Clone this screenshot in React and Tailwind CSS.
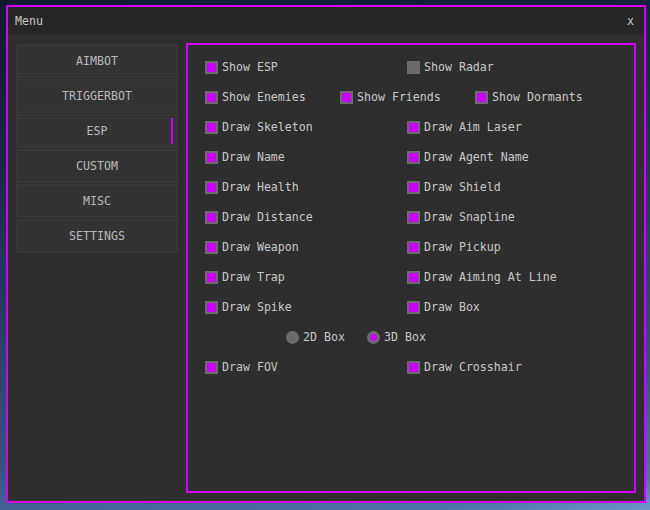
import { useState } from "react";

const font = { fontFamily: '"DejaVu Sans Mono", "Liberation Mono", monospace' };

const tabs = ["AIMBOT", "TRIGGERBOT", "ESP", "CUSTOM", "MISC", "SETTINGS"];

function Checkbox({ label, checked = true }) {
  return (
    <div className="flex items-center">
      <span
        className={`w-[13px] h-[13px] border-2 border-[#6b6b6b] ${
          checked ? "bg-[#cc00ff]" : "bg-[#6b6b6b]"
        }`}
      ></span>
      <span className="ml-[4px] pt-[1px] text-[#c8c8c8] text-[11.6px] leading-[13px] whitespace-pre">
        {label}
      </span>
    </div>
  );
}

function Radio({ label, checked }) {
  return (
    <div className="flex items-center">
      <span className="w-[13px] h-[13px] rounded-full bg-[#6b6b6b] flex items-center justify-center">
        {checked && <span className="w-[7px] h-[7px] rounded-full bg-[#cc00ff]"></span>}
      </span>
      <span className="ml-[4px] pt-[1px] text-[#c8c8c8] text-[11.6px] leading-[13px] whitespace-pre">
        {label}
      </span>
    </div>
  );
}

const pairs = [
  ["Draw Skeleton", "Draw Aim Laser"],
  ["Draw Name", "Draw Agent Name"],
  ["Draw Health", "Draw Shield"],
  ["Draw Distance", "Draw Snapline"],
  ["Draw Weapon", "Draw Pickup"],
  ["Draw Trap", "Draw Aiming At Line"],
  ["Draw Spike", "Draw Box"],
];

export default function App() {
  const [active] = useState("ESP");

  return (
    <div
      className="w-[650px] h-[510px] overflow-hidden pt-[5px] pl-[6px] bg-[linear-gradient(172deg,#111a30_0%,#1c2a4c_30%,#34507e_75%,#4f74a8_95%,#6f96cf_100%)]"
      style={font}
    >
      <div className="w-[640px] h-[498px] border-2 border-[#d400ff] bg-[#2e2e2e] flex flex-col">
        {/* title bar */}
        <div className="h-[28px] bg-[#262626] flex items-center justify-between pl-[7px] pr-[10px] pt-[2px] text-[#c8c8c8] text-[11.6px]">
          <span>Menu</span>
          <span>x</span>
        </div>

        <div className="flex pt-[8px] pl-[8px]">
          {/* sidebar */}
          <div className="w-[162px] mt-[1px] flex flex-col gap-[1px]">
            {tabs.map((t) => (
              <div
                key={t}
                className="relative h-[34px] border-2 border-[#383838] bg-[#333333] flex items-center justify-center pt-[2px] text-[#bababa] text-[11.6px]"
              >
                {t}
                {active === t && (
                  <span className="absolute right-[3px] top-[2px] w-[2px] h-[26px] bg-[#cc00ff]"></span>
                )}
              </div>
            ))}
          </div>

          {/* content panel */}
          <div className="ml-[8px] w-[450px] h-[450px] border-2 border-[#d400ff] pt-[7px] pl-[17px]">
            <div className="h-[30px] flex items-center">
              <div className="w-[202px]">
                <Checkbox label="Show ESP" />
              </div>
              <Checkbox label="Show Radar" checked={false} />
            </div>
            <div className="h-[30px] flex items-center">
              <div className="w-[135px]">
                <Checkbox label="Show Enemies" />
              </div>
              <div className="w-[135px]">
                <Checkbox label="Show Friends" />
              </div>
              <Checkbox label="Show Dormants" />
            </div>
            {pairs.map(([a, b]) => (
              <div key={a} className="h-[30px] flex items-center">
                <div className="w-[202px]">
                  <Checkbox label={a} />
                </div>
                <Checkbox label={b} />
              </div>
            ))}
            <div className="h-[30px] flex items-center pl-[81px]">
              <div className="w-[81px]">
                <Radio label="2D Box" />
              </div>
              <Radio label="3D Box" checked />
            </div>
            <div className="h-[30px] flex items-center">
              <div className="w-[202px]">
                <Checkbox label="Draw FOV" />
              </div>
              <Checkbox label="Draw Crosshair" />
            </div>
          </div>
        </div>
      </div>
    </div>
  );
}
